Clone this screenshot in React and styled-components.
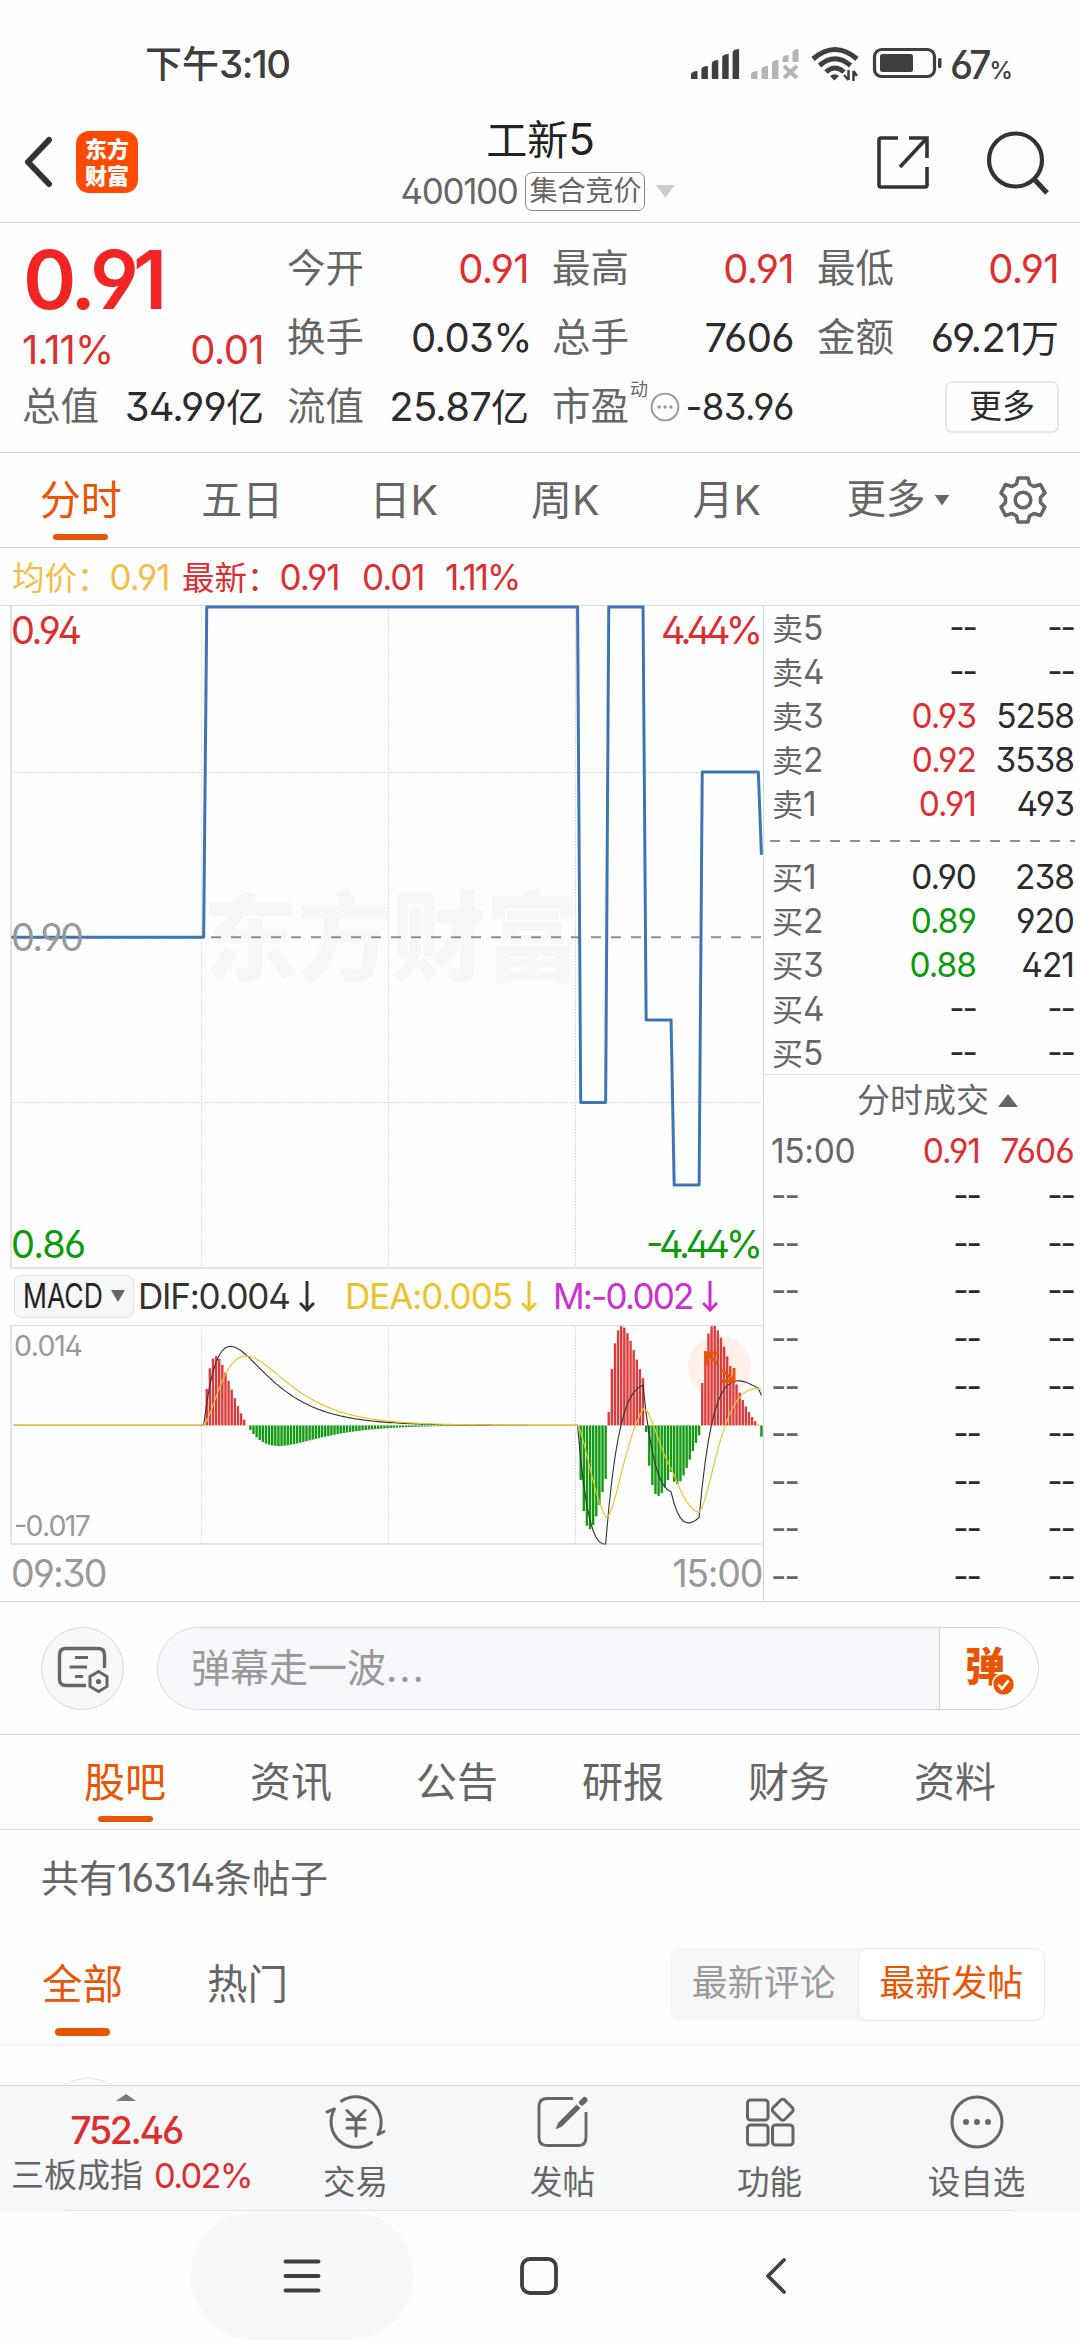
import React from "react";
import styled, { createGlobalStyle, css } from "styled-components";

const c = {
  red: "#dc2f2f",
  green: "#0c9b0c",
  orange: "#e95504",
  text: "#2c2c2c",
  label: "#666666",
  hint: "#999999",
  line: "#d6d6d6",
  panel: "#f6f7f9",
};

// One price per minute, as [price, minutes]
const priceRuns = [
  [0.9, 62],
  [0.94, 120],
  [0.88, 9],
  [0.94, 12],
  [0.89, 9],
  [0.87, 9],
  [0.92, 19],
  [0.91, 1],
];
const prices = priceRuns.flatMap(([price, n]) => Array(n).fill(price));

const quotes = [
  ["今开", "0.91", "", c.red],
  ["最高", "0.91", "", c.red],
  ["最低", "0.91", "", c.red],
  ["换手", "0.03%", "", c.text],
  ["总手", "7606", "", c.text],
  ["金额", "69.21", "万", c.text],
];

const sells = [
  ["卖", "5", "--", "--"],
  ["卖", "4", "--", "--"],
  ["卖", "3", "0.93", "5258", c.red],
  ["卖", "2", "0.92", "3538", c.red],
  ["卖", "1", "0.91", "493", c.red],
];

const buys = [
  ["买", "1", "0.90", "238"],
  ["买", "2", "0.89", "920", c.green],
  ["买", "3", "0.88", "421", c.green],
  ["买", "4", "--", "--"],
  ["买", "5", "--", "--"],
];

const getMacd = (list) => {
  let fast = list[0];
  let slow = list[0];
  let dea = 0;
  return list.map((p) => {
    fast += (p - fast) * (2 / 13);
    slow += (p - slow) * (2 / 27);
    const dif = fast - slow;
    dea += (dif - dea) * 0.2;
    return { dif, dea, bar: 2 * (dif - dea) };
  });
};

const slot = 751 / 241;
const xAt = (i) => 12 + (i + 0.5) * slot;
const grid = [201.5, 388.5, 575.5];

const PriceChart = () => {
  const points = prices
    .map((p, i) => `${xAt(i)},${332.3 - (p - 0.9) * 8260}`)
    .join(" ");
  return (
    <ChartSvg viewBox="0 1 763 663" width="763" height="663">
      <Watermark x="203" y="368" textLength="377" lengthAdjust="spacingAndGlyphs">
        东方财富
      </Watermark>
      {grid.map((x) => (
        <Dotted key={x} d={`M${x} 2V662`} />
      ))}
      <Dotted d="M12 167.5H762" />
      <Dotted d="M12 497.5H762" />
      <path d="M11 0V663H762" fill="none" stroke="#e2e2e2" strokeWidth="2" />
      <path d="M11 332.3H762" stroke="#8e8e8e" strokeWidth="2" strokeDasharray="10 10" />
      <polyline points={`12,332.3 ${points}`} fill="none" stroke="#3d75b3" strokeWidth="3" strokeLinejoin="round" />
      <ChartText x="11" y="39" size="38" fill={c.red} textLength="71">0.94</ChartText>
      <ChartText x="11" y="346" size="38" fill={c.hint} textLength="73">0.90</ChartText>
      <ChartText x="11" y="653" size="38" fill={c.green} textLength="75">0.86</ChartText>
      <ChartText x="661" y="39" size="38" fill={c.red} textLength="102">4.44%</ChartText>
      <ChartText x="646" y="653" size="38" fill={c.green} textLength="117">-4.44%</ChartText>
    </ChartSvg>
  );
};

const MacdChart = () => {
  const data = getMacd(prices);
  const all = data.flatMap((d) => [d.dif, d.dea, d.bar]);
  const max = Math.max(...all);
  const min = Math.min(...all);
  const yAt = (v) => 1 + ((max - v) / (max - min)) * 218;
  const zero = yAt(0);
  const toLine = (key) => data.map((d, i) => `${xAt(i)},${yAt(d[key])}`).join(" ");
  return (
    <ChartSvg viewBox="0 0 763 221" width="763" height="221">
      {grid.map((x) => (
        <Dotted key={x} d={`M${x} 2V219`} />
      ))}
      <path d="M11 0.5H762" stroke="#dcdcdc" />
      <path d="M11 0V219H762" fill="none" stroke="#e2e2e2" strokeWidth="2" />
      <circle cx="719.5" cy="42" r="31.5" fill="#fef0e8" />
      {data.map((d, i) =>
        Math.abs(d.bar) < 0.00002 ? null : (
          <rect
            key={i}
            x={xAt(i) - 1.2}
            y={Math.min(zero, yAt(d.bar))}
            width="2.4"
            height={Math.abs(yAt(d.bar) - zero)}
            fill={d.bar > 0 ? "#dd3b3b" : "#129a12"}
          />
        )
      )}
      <polyline points={toLine("dif")} fill="none" stroke="#333" strokeWidth="1.1" />
      <polyline points={toLine("dea")} fill="none" stroke="#e8c52c" strokeWidth="1.2" />
      <path
        d="M706 41V28H719M706 28L718 39M722 56H734V43M734 56L722 45"
        fill="none"
        stroke={c.orange}
        strokeWidth="3"
      />
      <ChartText x="14" y="30.5" size="28.5" fill={c.hint} textLength="69">0.014</ChartText>
      <ChartText x="14" y="211" size="28.5" fill={c.hint} textLength="77">-0.017</ChartText>
    </ChartSvg>
  );
};

const DownArrow = () => (
  <svg width="16" height="31" viewBox="0 0 16 31" fill="none" stroke="currentColor" strokeWidth="3">
    <path d="M8 0V29M1 22L8 29L15 22" />
  </svg>
);

const StatusIcons = () => (
  <svg width="253" height="36" viewBox="690 47 253 36" fill="#3f3f3f">
    {[8, 13, 19, 25, 30].map((h, i) => (
      <path key={h} d={`M${691 + i * 10.4} 80V${80 - h + 3}q1 -3 6.5 -3V80z`} />
    ))}
    <g fill="#b5b5b5">
      <path d="M751 80V75q1 -3 6.500 -3V80zM761.500 80V70q1 -3 6.500 -3V80zM772 80V64q1 -3 6.500 -3V80zM782.500 63V59q1 -3 6 -3V63zM792.500 63V53q1 -3 6 -3V63z" />
      <path d="M784 67L797 79M797 67L784 79" stroke="#b5b5b5" strokeWidth="4" />
    </g>
    <g fill="none" stroke="#3f3f3f" strokeWidth="5">
      <path d="M813 60Q835 41 857 60" />
      <path d="M819.500 66.500Q835 53 850.500 66.500" />
      <path d="M826 73Q835 65 844 73" />
    </g>
    <path d="M830 77q5 -3.500 9 0l-4.500 4.500z" />
    <path d="M848.500 71V81M848.500 81L844 76M853.500 82V72M853.500 72L857 77" stroke="#3f3f3f" strokeWidth="2.500" fill="none" />
    <rect x="874.500" y="50.500" width="60" height="27" rx="7" fill="none" stroke="#3f3f3f" strokeWidth="3.200" />
    <rect x="880" y="55" width="33" height="18" rx="2.500" />
    <rect x="938" y="59" width="3.500" height="10" rx="1.500" />
  </svg>
);

const GearIcon = () => (
  <svg width="50" height="50" viewBox="-25 -25 50 50" fill="none" stroke={c.label} strokeWidth="3.600" strokeLinejoin="round">
    <path d="M-5 -22H5L6.500 -16L11 -13.500L17.500 -15.500L22 -7L17.500 -2.500V2.500L22 7L17.500 15.500L11 13.500L6.500 16L5 22H-5L-6.500 16L-11 13.500L-17.500 15.500L-22 7L-17.500 2.500V-2.500L-22 -7L-17.500 -15.500L-11 -13.500L-6.500 -16Z" />
    <circle r="7.800" />
  </svg>
);

const TradeIcon = () => (
  <svg width="62" height="56" viewBox="-31 -28 62 56" fill="none" stroke={c.label} strokeWidth="3" strokeLinecap="round" strokeLinejoin="round">
    <path d="M-14.500 -21A25.500 25.500 0 0 1 22 12.500L28 9.500" />
    <path d="M15.500 20.500A25.500 25.500 0 0 1 -21.500 -13L-29 -10" />
    <path d="M-9 -11.500L0 -2.500L9 -11.500M-9 -2.500H9M-9 6H9M0 -2.500V14" />
  </svg>
);

const PostIcon = () => (
  <svg width="52" height="56" viewBox="-26 -28 52 56" fill="none" stroke={c.label} strokeWidth="2.800">
    <path d="M10 -23.500H-16Q-24 -23.500 -24 -15.500V15.500Q-24 23.500 -16 23.500H15.500Q23 23.500 23 15.500V-10" />
    <path d="M-7.500 7.500L-5 1L13.500 -17.500L17.500 -14L-1 4.500Z" fill={c.label} stroke="none" />
    <path d="M19 -19.500L21.500 -22" strokeWidth="6" strokeLinecap="round" />
  </svg>
);

const AppsIcon = () => (
  <svg width="52" height="56" viewBox="-26 -28 52 56" fill="none" stroke={c.label} strokeWidth="3">
    <rect x="-22.500" y="-22" width="20.500" height="20" rx="3" />
    <rect x="-22.500" y="3" width="20.500" height="20" rx="3" />
    <rect x="2.500" y="3" width="20.500" height="20" rx="3" />
    <rect x="4.500" y="-20.500" width="16.500" height="16.500" rx="3" transform="rotate(45 12.750 -12.250)" />
  </svg>
);

const MoreIcon = ({ size = 56, stroke = 1.5, color = c.label, dot = 1.5 }) => (
  <svg width={size} height={size} viewBox="-14 -14 28 28">
    <circle r="12.500" fill="none" stroke={color} strokeWidth={stroke} />
    {[-5.5, 0, 5.5].map((x) => (
      <circle key={x} cx={x} r={dot} fill={color} />
    ))}
  </svg>
);

const tools = [
  ["交易", <TradeIcon />],
  ["发帖", <PostIcon />],
  ["功能", <AppsIcon />],
  ["设自选", <MoreIcon />],
];

const Cell = ({ value, color }) =>
  value === "--" ? (
    <Empty color={color}>--</Empty>
  ) : (
    <Num size={33.5} color={color}>{value}</Num>
  );

const BookRows = ({ rows }) =>
  rows.map(([side, level, price, volume, color]) => (
    <BookRow key={side + level}>
      <Label size={31}>
        {side}
        <Num size={33.5}>{level}</Num>
      </Label>
      <Cell value={price} color={color || c.text} />
      <Cell value={volume} color={c.text} />
    </BookRow>
  ));

const App = () => {
  return (
    <Page>
      <GlobalStyle />
      <StatusBar>
        <Clock>
          下午<Num size={38.5} spacing={-0.04}>3:10</Num>
        </Clock>
        <StatusIcons />
        <Battery>
          67<small>%</small>
        </Battery>
      </StatusBar>

      <Header>
        <svg width="32" height="54" viewBox="0 0 32 54" fill="none" stroke="#333" strokeWidth="6" strokeLinecap="round">
          <path d="M26 5L5 27L26 49" strokeLinejoin="round" />
        </svg>
        <Logo>
          <span>东方</span>
          <span>财富</span>
        </Logo>
        <Heading>
          <Title>
            工新<Num size={44}>5</Num>
          </Title>
          <SubTitle>
            <Num size={35} spacing={-0.04}>400100</Num>
            <Badge>集合竞价</Badge>
            <Triangle w={20} h={13} color="#cccccc" down />
          </SubTitle>
        </Heading>
        <HeaderActions>
          <svg width="56" height="56" viewBox="0 0 56 56" fill="none" stroke="#333" strokeWidth="3.600">
            <path d="M23 4H6Q4 4 4 6V51Q4 53 6 53H50Q52 53 52 51V33M34 4H52V24M52 4L25 33" />
          </svg>
          <svg width="64" height="66" viewBox="0 0 64 66" fill="none" stroke="#333">
            <circle cx="30.500" cy="31" r="26.500" strokeWidth="4.200" />
            <path d="M49 50L62 64" strokeWidth="5" />
          </svg>
        </HeaderActions>
      </Header>

      <QuotePanel>
        <MainQuote>
          <LastPrice size={81} weight={600} color="#f32424" spacing={-0.075}>0.91</LastPrice>
          <Split>
            <Num size={40} color={c.red} spacing={-0.025}>1.11%</Num>
            <Num size={40} color={c.red} spacing={-0.015}>0.01</Num>
          </Split>
        </MainQuote>
        {quotes.map(([name, value, unit, color]) => (
          <Quote key={name}>
            <Label size={38.5}>{name}</Label>
            <Value percent={value.endsWith("%") || undefined}>
              <Num size={40} color={color} spacing={-0.015}>{value}</Num>
              {unit}
            </Value>
          </Quote>
        ))}
        <Quote>
          <Label size={38.5}>总值</Label>
          <Value><Num size={40} spacing={-0.02}>34.99</Num>亿</Value>
        </Quote>
        <Quote>
          <Label size={38.5}>流值</Label>
          <Value><Num size={40} spacing={-0.02}>25.87</Num>亿</Value>
        </Quote>
        <Quote>
          <Label size={38.5}>市盈</Label>
          <Sup>动</Sup>
          <MoreIcon size={30} stroke={1.8} color="#999" dot={1.6} />
          <Value><Num size={36.5} spacing={-0.015}>-83.96</Num></Value>
        </Quote>
        <MoreButton>更多</MoreButton>
      </QuotePanel>

      <PeriodTabs>
        <Tab active>分时</Tab>
        <Tab>五日</Tab>
        <Tab>日K</Tab>
        <Tab>周K</Tab>
        <Tab>月K</Tab>
        <MoreTab>
          更多
          <Triangle w={15} h={11} color={c.label} down />
        </MoreTab>
        <GearIcon />
      </PeriodTabs>

      <InfoLine>
        <Info color="#f3be48" w={170}>均价：<Num size={35}>0.91</Num></Info>
        <Info color={c.red} w={180}>最新：<Num size={35}>0.91</Num></Info>
        <Info color={c.red} w={83}><Num size={35}>0.01</Num></Info>
        <Info color={c.red}><Num size={35} spacing={-0.055}>1.11%</Num></Info>
      </InfoLine>

      <Market>
        <Charts>
          <PriceChart />
          <Indicators>
            <Picker>
              <PickerName>MACD</PickerName>
              <Triangle w={14} h={12} color={c.label} down />
            </Picker>
            <Indicator color="#333" w={207}><Num size={35} spacing={-0.035}>DIF:0.004</Num><DownArrow /></Indicator>
            <Indicator color="#ecc32b" w={208}><Num size={35} spacing={-0.03}>DEA:0.005</Num><DownArrow /></Indicator>
            <Indicator color="#cb2fd0"><Num size={35} spacing={-0.05}>M:-0.002</Num><DownArrow /></Indicator>
          </Indicators>
          <MacdChart />
          <TimeAxis>
            <Num size={37.5} spacing={-0.045}>09:30</Num>
            <Num size={37.5} spacing={-0.035}>15:00</Num>
          </TimeAxis>
        </Charts>
        <Side>
          <BookRows rows={sells} />
          <Dash>
            <svg width="305" height="2"><path d="M0 1H305" stroke="#8e8e8e" strokeWidth="2" strokeDasharray="10 10" /></svg>
          </Dash>
          <BookRows rows={buys} />
          <DealsTitle>
            分时成交
            <Triangle w={20} h={13} color={c.label} />
          </DealsTitle>
          <Deal filled>
            <Num size={33.5} spacing={-0.01}>15:00</Num>
            <Num size={33.5} color={c.red}>0.91</Num>
            <Num size={33.5} color={c.red} spacing={-0.025}>7606</Num>
          </Deal>
          {Array.from({ length: 9 }, (_, i) => (
            <Deal key={i}>
              <Empty>--</Empty>
              <Empty color={c.text}>--</Empty>
              <Empty color={c.text}>--</Empty>
            </Deal>
          ))}
        </Side>
      </Market>

      <CommentBar>
        <RoundButton>
          <svg width="56" height="52" viewBox="0 0 56 52" fill="none" stroke={c.label} strokeWidth="3.400">
            <path d="M31 41.500H11Q4.500 41.500 4.500 35V11Q4.500 4.500 11 4.500H43Q49.500 4.500 49.500 11V24" />
            <path d="M20 13.500H33M14.500 23H32M20 32.500H28" strokeWidth="3" />
            <path d="M43.500 27.500L52 32.500V42.500L43.500 47.500L35 42.500V32.500Z" strokeWidth="3" />
            <circle cx="43.500" cy="37.500" r="2.600" fill={c.label} stroke="none" />
          </svg>
        </RoundButton>
        <InputBox>
          <Placeholder>弹幕走一波<span>...</span></Placeholder>
          <Danmu>
            弹
            <Check viewBox="-11 -11 22 22">
              <circle r="10.500" fill={c.orange} stroke="#fff" strokeWidth="1.500" />
              <path d="M-5 0L-1.500 4L5 -4" fill="none" stroke="#fff" strokeWidth="2.500" />
            </Check>
          </Danmu>
        </InputBox>
      </CommentBar>

      <ForumTabs>
        <Tab wide active>股吧</Tab>
        <Tab wide>资讯</Tab>
        <Tab wide>公告</Tab>
        <Tab wide>研报</Tab>
        <Tab wide>财务</Tab>
        <Tab wide>资料</Tab>
      </ForumTabs>

      <PostCount>
        共有<Num size={39} spacing={-0.035}>16314</Num>条帖子
      </PostCount>

      <FilterRow>
        <Filter active>全部</Filter>
        <Filter>热门</Filter>
        <Segment>
          <SegmentItem>最新评论</SegmentItem>
          <SegmentItem active>最新发帖</SegmentItem>
        </Segment>
      </FilterRow>

      <Feed>
        <Avatar />
      </Feed>

      <BottomBar>
        <IndexCell>
          <Triangle w={20} h={7} color="#777" />
          <Num size={37.5} color={c.red} weight={500} spacing={-0.062}>752.46</Num>
          <IndexLine>
            三板成指
            <Num size={34.5} color={c.red} spacing={-0.05}>0.02%</Num>
          </IndexLine>
        </IndexCell>
        {tools.map(([name, icon]) => (
          <Tool key={name}>
            {icon}
            {name}
          </Tool>
        ))}
      </BottomBar>

      <NavBar>
        <NavKey pressed>
          <svg width="38" height="36" stroke="#404040" strokeWidth="4" strokeLinecap="round">
            <path d="M2.500 3.500H35.500M2.500 18H35.500M2.500 32.500H35.500" />
          </svg>
        </NavKey>
        <NavKey>
          <svg width="38" height="38" fill="none" stroke="#404040" strokeWidth="3.800">
            <rect x="2" y="2" width="34" height="34" rx="8" />
          </svg>
        </NavKey>
        <NavKey>
          <svg width="22" height="38" fill="none" stroke="#404040" strokeWidth="3.800" strokeLinecap="round" strokeLinejoin="round">
            <path d="M19 3L3 19L19 35" />
          </svg>
        </NavKey>
      </NavBar>
    </Page>
  );
};

const GlobalStyle = createGlobalStyle`
  * {
    box-sizing: border-box;
  }
  body {
    margin: 0;
    background: #fefefe;
  }
  svg {
    display: block;
    flex: none;
  }
`;

const Page = styled.main`
  width: 1080px;
  height: 2340px;
  overflow: hidden;
  display: flex;
  flex-direction: column;
  background: #fefefe;
  color: ${c.label};
  font-family: Inter, "Noto Sans CJK SC", sans-serif;
  font-weight: 400;
  line-height: 1;
  white-space: nowrap;
  > * {
    flex: none;
  }
`;

const Num = styled.span`
  font-size: ${(p) => p.size}px;
  font-weight: ${(p) => p.weight || 400};
  letter-spacing: ${(p) => p.spacing ?? -0.03}em;
  color: ${(p) => p.color || "inherit"};
  font-feature-settings: "ss01", "cv09";
`;

const LastPrice = styled(Num)`
  margin-left: 1px;
  font-kerning: none;
`;

// Placeholder dashes of a cell without a value
const Empty = styled.span`
  padding-bottom: 3px;
  font-size: 33.5px;
  letter-spacing: -0.06em;
  color: ${(p) => p.color || "inherit"};
`;

const Label = styled.span`
  font-size: ${(p) => p.size}px;
`;

const Triangle = styled.i`
  width: ${(p) => p.w}px;
  height: ${(p) => p.h}px;
  background: ${(p) => p.color};
  clip-path: ${(p) =>
    p.down ? "polygon(0 0, 100% 0, 50% 100%)" : "polygon(50% 0, 100% 100%, 0 100%)"};
`;

const StatusBar = styled.div`
  height: 102px;
  padding: 26px 0 0 145px;
  display: flex;
  align-items: center;
  color: #3f3f3f;
  font-weight: 500;
`;

const Clock = styled.div`
  width: 545px;
  font-size: 37px;
  ${Num} {
    font-weight: 500;
  }
`;

const Battery = styled.div`
  margin-left: 7px;
  font-size: 39px;
  letter-spacing: -0.06em;
  font-feature-settings: "ss01";
  small {
    font-size: 24px;
  }
`;

const Header = styled.header`
  height: 121px;
  border-bottom: 1px solid ${c.line};
  padding: 0 31px 0 23px;
  display: flex;
  align-items: center;
`;

const Logo = styled.div`
  width: 62px;
  height: 62px;
  margin-left: 21px;
  border-radius: 13px;
  background: #ff4b02;
  color: #fff;
  display: flex;
  flex-direction: column;
  align-items: center;
  justify-content: center;
  gap: 5px;
  font-size: 22px;
  font-weight: 900;
`;

const Heading = styled.div`
  flex: 1;
  padding: 3px 0 0 67px;
  display: flex;
  flex-direction: column;
  align-items: center;
  gap: 10px;
`;

const Title = styled.h1`
  margin: 0;
  font-size: 41px;
  font-weight: 400;
  line-height: 44px;
  color: #222;
`;

const SubTitle = styled.div`
  display: flex;
  align-items: center;
  gap: 8px;
  margin-right: 4px;
  ${Triangle} {
    margin-left: 2px;
  }
`;

const Badge = styled.span`
  height: 39px;
  padding: 0 3px;
  border: 1px solid #888;
  border-radius: 7px;
  font-size: 28px;
  line-height: 36px;
`;

const HeaderActions = styled.div`
  display: flex;
  align-items: center;
  gap: 54px;
`;

const QuotePanel = styled.section`
  height: 230px;
  border-bottom: 1px solid ${c.line};
  padding: 11px 21px 0 22px;
  display: grid;
  grid-template-columns: repeat(4, 242px);
  grid-auto-rows: 69px;
  column-gap: 23px;
  color: ${c.text};
`;

const MainQuote = styled.div`
  grid-row: span 2;
  padding-top: 6px;
  display: flex;
  flex-direction: column;
  gap: 9px;
`;

const Split = styled.div`
  display: flex;
  justify-content: space-between;
`;

const Quote = styled.div`
  display: flex;
  align-items: center;
  ${Label} {
    color: ${c.label};
  }
`;

const Value = styled.span`
  margin-left: auto;
  margin-right: ${(p) => (p.percent ? -3 : 0)}px;
  font-size: 38px;
`;

const Sup = styled.sup`
  align-self: flex-start;
  margin: 9px 2px 0 1px;
  font-size: 18px;
  color: ${c.label};
`;

const MoreButton = styled.button`
  width: 114px;
  height: 52px;
  justify-self: end;
  align-self: center;
  padding: 0;
  border: 2px solid #e8e8e8;
  border-radius: 7px;
  background: none;
  color: ${c.text};
  font: inherit;
  font-size: 33px;
`;

const PeriodTabs = styled.nav`
  height: 95px;
  border-bottom: 1px solid ${c.line};
  display: flex;
  align-items: center;
`;

const Tab = styled.div`
  width: ${(p) => (p.wide ? 166 : 161.5)}px;
  height: 94px;
  padding-top: 27px;
  text-align: center;
  font-size: 41px;
  ${(p) =>
    p.active &&
    css`
      color: ${c.orange};
      &::after {
        content: "";
        display: block;
        width: 55px;
        height: 6px;
        margin: 13px auto 0;
        border-radius: 3px;
        background: ${c.orange};
      }
    `}
`;

const MoreTab = styled.div`
  width: 151px;
  margin-left: 39px;
  display: flex;
  align-items: center;
  gap: 9px;
  font-size: 39.5px;
`;

const InfoLine = styled.div`
  height: 58px;
  border-bottom: 1px solid ${c.line};
  padding: 3px 0 0 12px;
  display: flex;
  align-items: center;
`;

const Info = styled.span`
  width: ${(p) => (p.w ? `${p.w}px` : "auto")};
  font-size: 32.5px;
  color: ${(p) => p.color};
`;

const Market = styled.section`
  height: 996px;
  border-bottom: 1px solid ${c.line};
  display: flex;
`;

const Charts = styled.div`
  width: 764px;
  border-right: 1px solid ${c.line};
`;

const ChartSvg = styled.svg`
  overflow: visible;
`;

const Watermark = styled.text`
  font-family: "Noto Sans CJK SC", sans-serif;
  font-size: 97px;
  font-weight: 900;
  fill: #f7f7f7;
`;

const ChartText = styled.text`
  font-size: ${(p) => p.size}px;
  font-feature-settings: "ss01", "cv09";
  font-kerning: none;
`;

const Dotted = styled.path`
  stroke: #d4d4d4;
  stroke-dasharray: 1.5 1.5;
`;

const Indicators = styled.div`
  height: 56px;
  padding: 0 0 2px 14px;
  display: flex;
  align-items: center;
`;

const Picker = styled.div`
  width: 120px;
  height: 43px;
  margin-right: 4px;
  padding: 0 8px 0 8px;
  display: flex;
  align-items: center;
  justify-content: space-between;
  border: 1px solid #dfe1e6;
  border-radius: 7px;
  background: ${c.panel};
`;

const PickerName = styled.span`
  width: 80px;
  font-size: 34px;
  color: #222;
  transform: scaleX(0.78);
  transform-origin: left;
`;

const Indicator = styled.span`
  width: ${(p) => (p.w ? `${p.w}px` : "auto")};
  padding-top: 1px;
  display: flex;
  align-items: center;
  gap: 9px;
  color: ${(p) => p.color};
`;

const TimeAxis = styled.div`
  height: 54px;
  padding: 2px 1px 0 11px;
  display: flex;
  align-items: center;
  justify-content: space-between;
  color: ${c.hint};
`;

const Side = styled.div`
  flex: 1;
  padding-top: 1px;
`;

const BookRow = styled.div`
  height: 44px;
  padding: 0 6px 0 8px;
  display: grid;
  grid-template-columns: 1fr 104px 98px;
  align-items: center;
  > :not(:first-child) {
    text-align: right;
  }
`;

const Dash = styled.div`
  height: 29px;
  padding: 13px 0 0 6px;
`;

const DealsTitle = styled.div`
  height: 52px;
  margin-top: -2px;
  border-top: 1px solid #e2e2e2;
  padding-left: 31px;
  display: flex;
  align-items: center;
  justify-content: center;
  gap: 9px;
  font-size: 33px;
`;

const Deal = styled.div`
  height: 47.6px;
  padding: ${(p) => (p.filled ? 3 : 0)}px 6px 0 7px;
  display: grid;
  grid-template-columns: 1fr 100px 94px;
  align-items: center;
  > :not(:first-child) {
    text-align: right;
  }
`;

const CommentBar = styled.div`
  height: 133px;
  border-bottom: 1px solid ${c.line};
  padding: 0 41px;
  display: flex;
  align-items: center;
  gap: 33px;
`;

const RoundButton = styled.div`
  width: 83px;
  height: 83px;
  border: 1px solid #d5d8dd;
  border-radius: 50%;
  background: ${c.panel};
  display: flex;
  align-items: center;
  justify-content: center;
  padding: 4px 0 0 1px;
`;

const InputBox = styled.div`
  flex: 1;
  height: 83px;
  border: 1px solid #d2d5d9;
  border-radius: 42px;
  overflow: hidden;
  display: flex;
`;

const Placeholder = styled.div`
  flex: 1;
  padding-left: 33px;
  background: #f6f7fa;
  font-size: 39px;
  line-height: 80px;
  color: ${c.hint};
  span {
    letter-spacing: 0.05em;
  }
`;

const Danmu = styled.div`
  position: relative;
  width: 99px;
  padding-left: 25px;
  border-left: 1px solid #d2d5d9;
  color: ${c.orange};
  font-size: 40px;
  font-weight: 900;
  line-height: 78px;
`;

const Check = styled.svg`
  position: absolute;
  left: 52px;
  top: 45px;
  width: 23px;
  height: 23px;
`;

const ForumTabs = styled.nav`
  height: 95px;
  border-bottom: 1px solid ${c.line};
  padding-left: 42px;
  display: flex;
`;

const PostCount = styled.div`
  height: 96px;
  padding-left: 41px;
  font-size: 38px;
  line-height: 95px;
`;

const FilterRow = styled.div`
  height: 120px;
  border-bottom: 3px solid #f5f6f6;
  padding: 0 35px 0 42px;
  display: flex;
  align-items: center;
`;

const Filter = styled.div`
  width: 165px;
  height: 117px;
  padding-top: 39px;
  font-size: 40.5px;
  ${(p) =>
    p.active &&
    css`
      color: ${c.orange};
      &::after {
        content: "";
        display: block;
        width: 55px;
        height: 8px;
        margin: 22px 0 0 13px;
        border-radius: 4px;
        background: ${c.orange};
      }
    `}
`;

const Segment = styled.div`
  width: 375px;
  height: 73px;
  margin-left: auto;
  display: flex;
  border-radius: 10px;
  background: #f7f7fa;
`;

const SegmentItem = styled.div`
  flex: 1;
  display: flex;
  align-items: center;
  justify-content: center;
  padding-bottom: 3px;
  border: 1.5px solid ${(p) => (p.active ? "#ececec" : "transparent")};
  border-radius: 10px;
  background: ${(p) => (p.active ? "#fff" : "none")};
  color: ${(p) => (p.active ? c.orange : c.hint)};
  font-size: 36px;
`;

const Feed = styled.div`
  height: 39px;
  overflow: hidden;
  padding: 32px 0 0 35px;
`;

const Avatar = styled.div`
  width: 106px;
  height: 106px;
  border: 1px solid #e6e6ea;
  border-radius: 50%;
`;

const BottomBar = styled.nav`
  height: 126px;
  border-top: 1px solid ${c.line};
  background: linear-gradient(#e0e2e4, #e0e2e4) 66px 100% / 948px 1px no-repeat ${c.panel};
  display: grid;
  grid-template-columns: 252px repeat(4, 207px);
`;

const IndexCell = styled.div`
  padding-top: 8px;
  display: flex;
  flex-direction: column;
  align-items: center;
  > ${Num} {
    margin-top: 11px;
  }
`;

const IndexLine = styled.div`
  width: 241px;
  margin: 9px 0 0 11px;
  align-self: flex-start;
  display: flex;
  align-items: center;
  justify-content: space-between;
  font-size: 33px;
`;

const Tool = styled.div`
  padding-top: 8px;
  display: flex;
  flex-direction: column;
  align-items: center;
  gap: 17px;
  font-size: 32.5px;
`;

const NavBar = styled.footer`
  height: 129px;
  padding-left: 191px;
  display: flex;
  gap: 15px;
`;

const NavKey = styled.div`
  width: 222px;
  display: flex;
  align-items: center;
  justify-content: center;
  border-radius: 64px;
  background: ${(p) => (p.pressed ? "#f8f8f8" : "none")};
`;

export default App;
